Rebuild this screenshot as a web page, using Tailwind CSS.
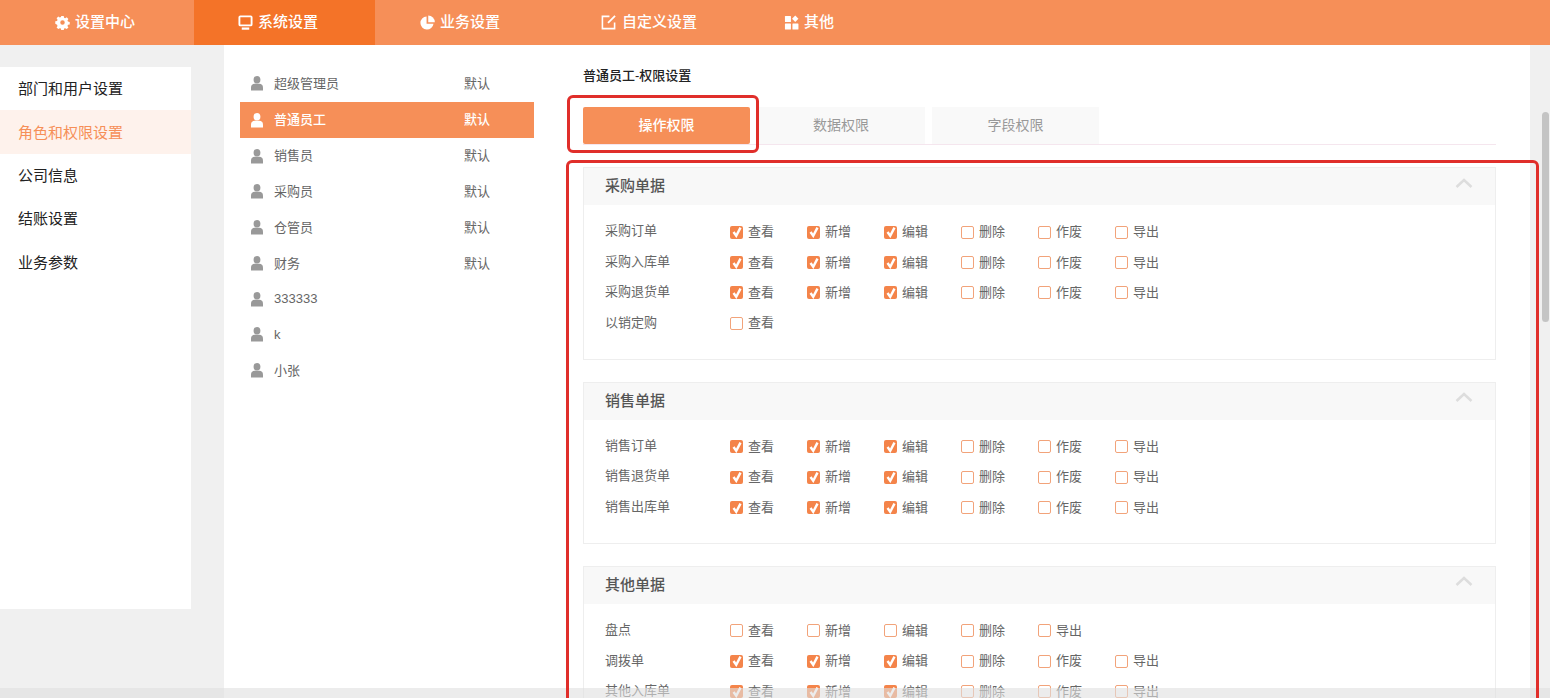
<!DOCTYPE html>
<html lang="zh-CN">
<head>
    <meta charset="UTF-8">
    <title>权限设置</title>
    <script src="https://cdn.jsdelivr.net/npm/@tailwindcss/browser@4"></script>
</head>
<body class="relative h-[698px] overflow-hidden bg-[#f0f0f0] text-[#666] font-['Liberation_Sans','Noto_Sans_CJK_SC',sans-serif]">

    <!-- 顶部导航 -->
    <nav class="flex h-[45px] bg-[#f68f58] text-[15px] font-medium text-white">
        <a class="flex w-[194px] items-center gap-[5px] pl-[55px]">
            <svg class="size-[15px]" viewBox="0 0 16 16" fill="currentColor"><path fill-rule="evenodd" d="M6.7 1h2.6l.4 1.9 1.2.5 1.6-1 1.8 1.8-1 1.6.5 1.2 1.9.4v2.6l-1.9.4-.5 1.2 1 1.6-1.8 1.8-1.6-1-1.2.5-.4 1.9H6.7l-.4-1.9-1.2-.5-1.6 1-1.8-1.8 1-1.6-.5-1.2L.3 9.3V6.7l1.9-.4.5-1.2-1-1.6 1.8-1.8 1.6 1 1.2-.5zM8 5.6a2.4 2.4 0 1 0 0 4.8 2.4 2.4 0 0 0 0-4.8z"/></svg>
            设置中心
        </a>
        <a class="flex w-[181px] items-center gap-[5px] bg-[#f47328] pl-[44px]">
            <svg class="size-[15px]" viewBox="0 0 16 16" fill="none" stroke="currentColor" stroke-width="2"><rect x="1.5" y="1.5" width="13" height="9.5" rx="1"/><path d="M4 14.5h8" stroke-width="2.4"/></svg>
            系统设置
        </a>
        <a class="flex w-[181px] items-center gap-[5px] pl-[45px]">
            <svg class="size-[15px]" viewBox="0 0 16 16" fill="currentColor"><path d="M7 1.6a7 7 0 1 0 7.4 7.8H7z"/><path d="M8.8.4v7.2h7A7.2 7.2 0 0 0 8.8.4z"/></svg>
            业务设置
        </a>
        <a class="flex w-[183px] items-center gap-[6px] pl-[45px]">
            <svg class="size-[15px]" viewBox="0 0 16 16" fill="none" stroke="currentColor" stroke-width="1.7"><path d="M9 1.5H1.5v13h13V8"/><path d="M15 1 7.5 8.5" stroke-width="1.9"/></svg>
            自定义设置
        </a>
        <a class="flex items-center gap-[5px] pl-[45px]">
            <svg class="size-[15px]" viewBox="0 0 16 16" fill="currentColor"><rect x="1" y="1" width="6.4" height="6.4" rx=".6"/><path d="M12 .6 15.4 4 12 7.4 8.6 4z"/><rect x="1" y="9" width="6.4" height="6.4" rx=".6"/><rect x="9" y="9" width="6.4" height="6.4" rx=".6"/></svg>
            其他
        </a>
    </nav>

    <div class="flex h-[653px]">
        <!-- 左侧菜单 -->
        <aside class="mt-[22px] mr-[33px] h-[542px] w-[191px] bg-white text-[15px] text-[#222]">
            <div class="flex h-[43.3px] items-center pl-[18px] pt-[2px]">部门和用户设置</div>
            <div class="flex h-[43.3px] items-center bg-[#fef2ec] pl-[18px] pt-[2px] text-[#f68f58]">角色和权限设置</div>
            <div class="flex h-[43.3px] items-center pl-[18px] pt-[2px]">公司信息</div>
            <div class="flex h-[43.3px] items-center pl-[18px] pt-[2px]">结账设置</div>
            <div class="flex h-[43.3px] items-center pl-[18px] pt-[2px]">业务参数</div>
        </aside>

        <main class="flex w-[1306px] bg-white">
            <!-- 角色列表 -->
            <ul id="roles" class="ml-[16px] mt-[21px] w-[294px] text-[13px]"></ul>

            <!-- 权限设置 -->
            <div class="ml-[49px] w-[913px]">
                <h2 class="mt-[22px] text-[13px] leading-[18px] font-medium text-[#222]">普通员工-权限设置</h2>
                <div class="mt-[22px] flex h-[38px] gap-[7.5px] border-b border-[#f5e6ee] text-[14px] text-[#999]">
                    <div class="flex h-[37px] w-[167px] items-center justify-center rounded-[2px] bg-[#f68f58] font-medium text-white">操作权限</div>
                    <div class="flex h-[37px] w-[167px] items-center justify-center bg-[#f9f9f9]">数据权限</div>
                    <div class="flex h-[37px] w-[167px] items-center justify-center bg-[#f9f9f9]">字段权限</div>
                </div>
                <div id="sections" class="mt-[22px] flex flex-col gap-[22px]"></div>
            </div>
        </main>

        <!-- 滚动条 -->
        <div class="ml-[12px] mt-[67px] h-[210px] w-[7px] rounded-full bg-[#c4c4c4]"></div>
    </div>

    <!-- 底部遮罩 -->
    <div class="absolute inset-x-0 bottom-0 h-[10px] bg-[#e0e0e0]/60"></div>

    <!-- 红色标注框 -->
    <div class="absolute left-[567px] top-[95px] h-[58px] w-[192px] rounded-[6px] border-[3px] border-[#e02e2a]"></div>
    <div class="absolute left-[566px] top-[160px] h-[600px] w-[973px] rounded-[6px] border-[3px] border-[#e02e2a]"></div>

    <script>
        const roles = [
            ['超级管理员', true], ['普通员工', true], ['销售员', true], ['采购员', true], ['仓管员', true],
            ['财务', true], ['333333', false], ['k', false], ['小张', false]
        ];
        const userIcon = '<svg class="h-[15px] w-[12px]" viewBox="0 0 12 15" fill="currentColor"><ellipse cx="6" cy="3.8" rx="3.4" ry="3.8"/><path d="M0 14.6v-3.2C0 9.2 1.8 7.8 3.4 7.8h5.2c1.6 0 3.4 1.4 3.4 3.6v3.2z"/></svg>';

        document.getElementById('roles').innerHTML = roles.map(([name, isDefault], i) => {
            const rowClass = i === 1
                ? 'flex h-[36.5px] items-center bg-[#f68f58] font-medium text-white'
                : 'flex h-[35.75px] items-center text-[#666]';
            const iconClass = i === 1 ? 'ml-[11px] mr-[11px] text-white' : 'ml-[11px] mr-[11px] text-[#999]';
            return `<li class="${rowClass}"><span class="${iconClass}">${userIcon}</span><span class="w-[190px]">${name}</span><span>${isDefault ? '默认' : ''}</span></li>`;
        }).join('');

        const FULL = ['查看', '新增', '编辑', '删除', '作废', '导出'];
        const NO_VOID = ['查看', '新增', '编辑', '删除', '导出'];
        const sections = [
            ['采购单据', [
                ['采购订单', FULL, 3], ['采购入库单', FULL, 3], ['采购退货单', FULL, 3], ['以销定购', ['查看'], 0]
            ]],
            ['销售单据', [
                ['销售订单', FULL, 3], ['销售退货单', FULL, 3], ['销售出库单', FULL, 3]
            ]],
            ['其他单据', [
                ['盘点', NO_VOID, 0], ['调拨单', FULL, 3], ['其他入库单', FULL, 3]
            ]]
        ];
        const check = (text, on) => `<label class="flex w-[77px] items-center gap-[5px] text-[13px] leading-[20px] text-[#666]">
            ${on
                ? '<span class="flex size-[13px] items-center justify-center rounded-[2px] bg-[#f4844a]"><svg class="size-[12px]" viewBox="0 0 11 11" fill="none" stroke="#fff" stroke-width="2.2"><path d="M2.3 5.5 4.8 9 8.7 1.5"/></svg></span>'
                : '<span class="size-[13px] rounded-[2px] border-[1.5px] border-[#f2a37a] bg-white"></span>'}
            <span>${text}</span></label>`;

        document.getElementById('sections').innerHTML = sections.map(([title, rows]) => `
            <section class="border border-[#eee]">
                <header class="flex h-[37px] items-center justify-between bg-[#f8f8f8] pl-[21px] pr-[22px] text-[15px] font-medium text-[#555]">
                    <span>${title}</span>
                    <svg class="-mt-[8px] h-[12px] w-[18px]" viewBox="0 0 18 12" fill="none" stroke="#ddd" stroke-width="2.5"><path d="M1.5 10 9 3l7.5 7"/></svg>
                </header>
                <div class="pb-[20px] pl-[21px] pt-[12px]">
                    ${rows.map(([label, items, onCount]) => `<div class="flex h-[30.4px] items-center">
                        <span class="-mt-[2px] w-[125px] text-[13px] text-[#666]">${label}</span>
                        ${items.map((t, i) => check(t, i < onCount)).join('')}
                    </div>`).join('')}
                </div>
            </section>`).join('');
    </script>
</body>
</html>
